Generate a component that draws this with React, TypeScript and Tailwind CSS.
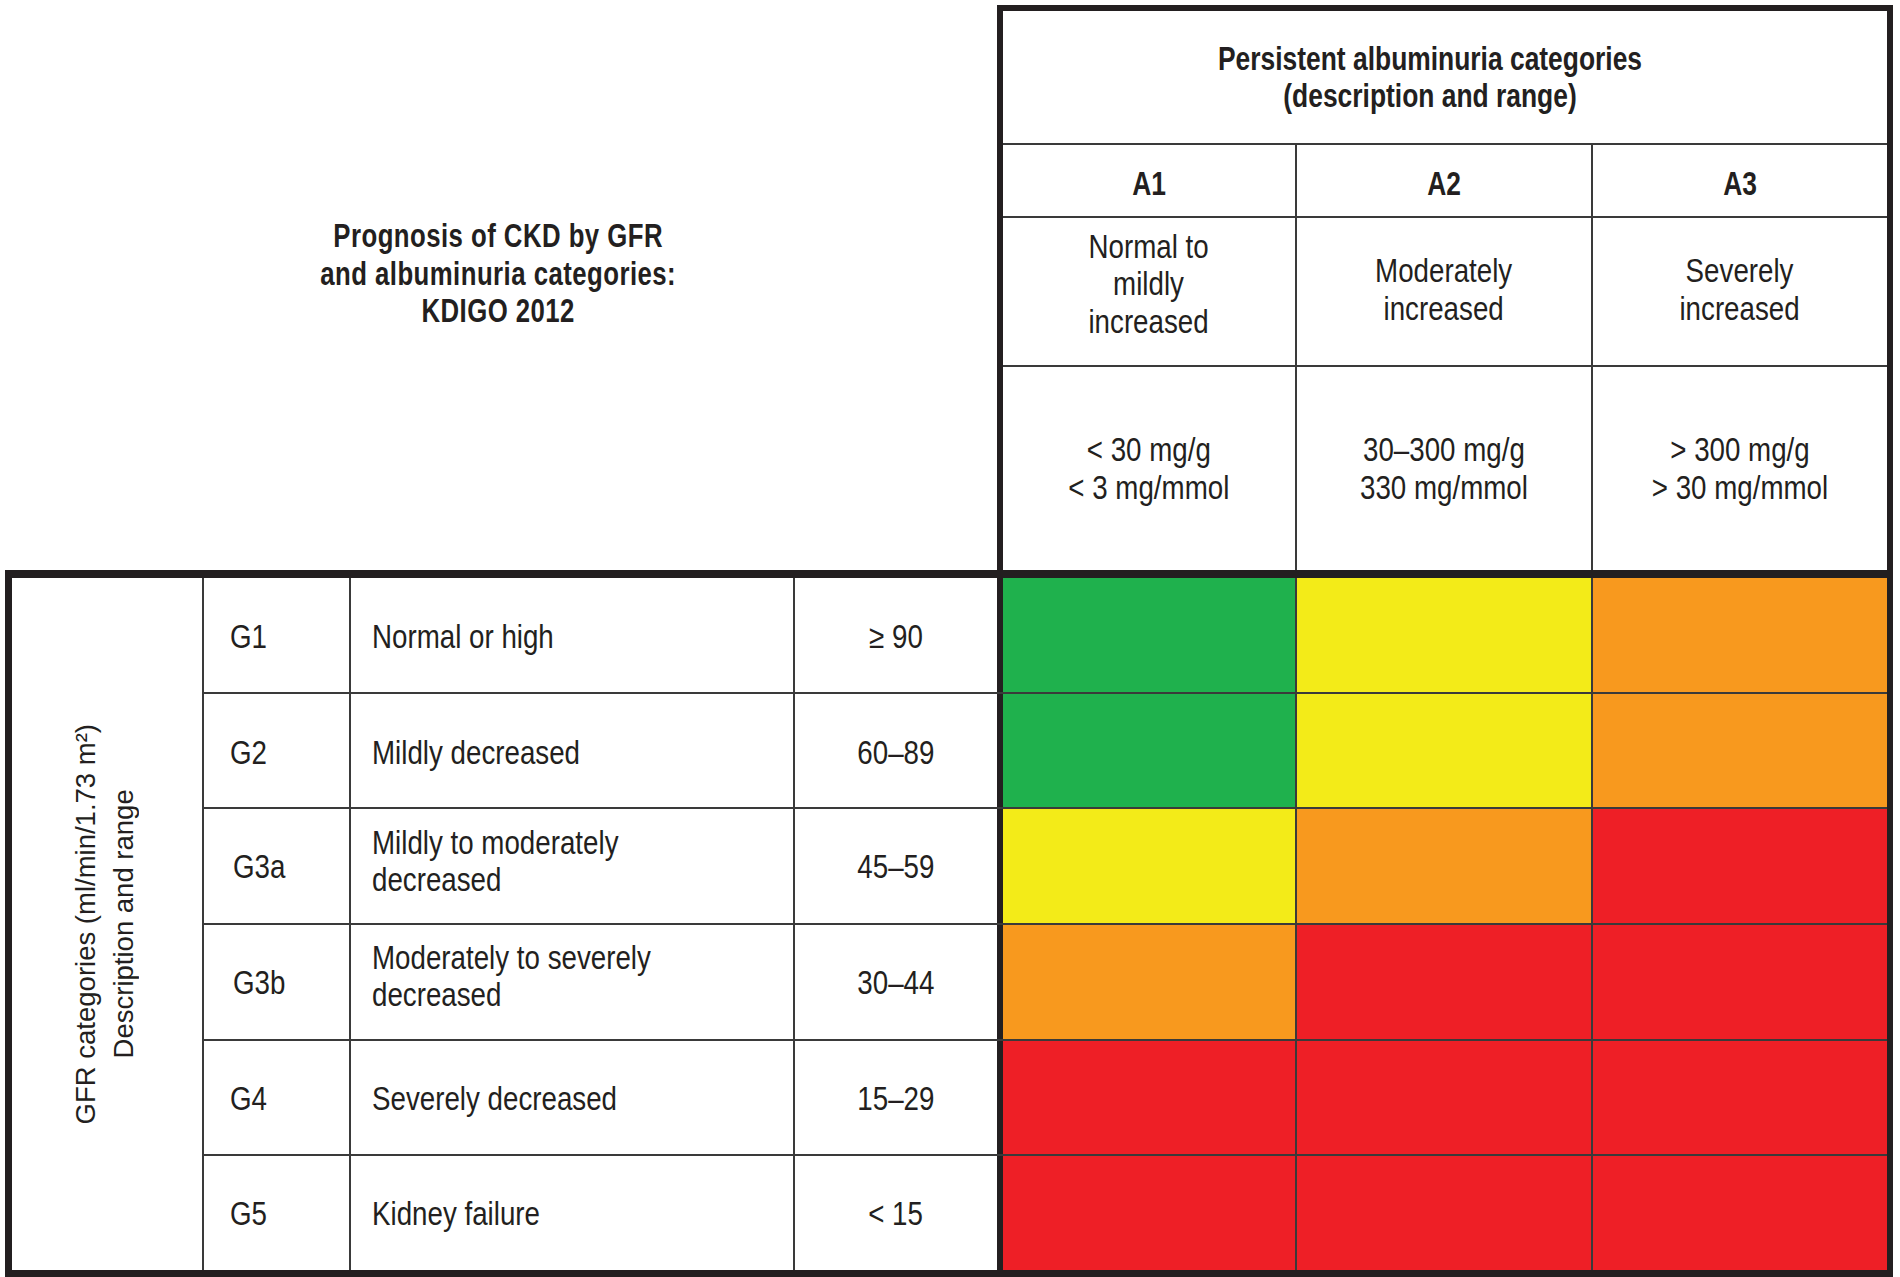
import React from "react";

const G = "bg-[#1fb14d]";
const Y = "bg-[#f3eb18]";
const O = "bg-[#f8991e]";
const R = "bg-[#ee1f26]";

type Row = { g: string; desc: React.ReactNode; range: string; colors: string[]; gpad: string; dpad: string };

const rows: Row[] = [
  { g: "G1", desc: "Normal or high", range: "≥ 90", colors: [G, Y, O], gpad: "pl-[26px]", dpad: "pt-[4px]" },
  { g: "G2", desc: "Mildly decreased", range: "60–89", colors: [G, Y, O], gpad: "pl-[26px]", dpad: "pt-[4px]" },
  {
    g: "G3a",
    desc: (
      <>
        Mildly to moderately
        <br />
        decreased
      </>
    ),
    range: "45–59",
    colors: [Y, O, R],
    gpad: "pl-[29px]",
    dpad: "pb-[10px]",
  },
  {
    g: "G3b",
    desc: (
      <>
        Moderately to severely
        <br />
        decreased
      </>
    ),
    range: "30–44",
    colors: [O, R, R],
    gpad: "pl-[29px]",
    dpad: "pb-[11px]",
  },
  { g: "G4", desc: "Severely decreased", range: "15–29", colors: [R, R, R], gpad: "pl-[26px]", dpad: "pt-[2px]" },
  { g: "G5", desc: "Kidney failure", range: "< 15", colors: [R, R, R], gpad: "pl-[26px]", dpad: "pt-[1px]" },
];

const line = "border-[#3a3a3a]";

export default function App() {
  return (
    <div className="w-[1900px] h-[1277px] bg-white text-[#231f20] font-['Liberation_Sans',Arial,sans-serif] text-[33px] leading-[37.5px] overflow-hidden">
      {/* top section */}
      <div className="flex pt-[5px] h-[570px]">
        <div className="w-[997px] flex items-center justify-center pb-[28px]">
          <div className="text-center font-bold scale-x-[0.78] tracking-[0.6px]">
            Prognosis of CKD by GFR
            <br />
            and albuminuria categories:
            <br />
            KDIGO 2012
          </div>
        </div>
        <div className="w-[896px] border-t-[6px] border-l-[6px] border-r-[6px] border-[#231f20] flex flex-col">
          <div className={`h-[134px] border-b-2 ${line} flex items-center justify-center pr-[30px]`}>
            <div className="text-center font-bold scale-x-[0.8]">
              Persistent albuminuria categories
              <br />
              (description and range)
            </div>
          </div>
          <div className={`h-[73px] border-b-2 ${line} grid grid-cols-[294px_296px_1fr] font-bold`}>
            <div className={`border-r-2 ${line} flex items-center justify-center pt-[6px]`}>
              <div className="scale-x-[0.8]">A1</div>
            </div>
            <div className={`border-r-2 ${line} flex items-center justify-center pt-[6px]`}>
              <div className="scale-x-[0.8]">A2</div>
            </div>
            <div className="flex items-center justify-center pt-[6px]">
              <div className="scale-x-[0.8]">A3</div>
            </div>
          </div>
          <div className={`h-[149px] border-b-2 ${line} grid grid-cols-[294px_296px_1fr] text-center`}>
            <div className={`border-r-2 ${line} flex items-center justify-center pb-[15px]`}>
              <div className="scale-x-[0.84]">
                Normal to
                <br />
                mildly
                <br />
                increased
              </div>
            </div>
            <div className={`border-r-2 ${line} flex items-center justify-center pb-[4px]`}>
              <div className="scale-x-[0.84]">
                Moderately
                <br />
                increased
              </div>
            </div>
            <div className="flex items-center justify-center pb-[4px]">
              <div className="scale-x-[0.84]">
                Severely
                <br />
                increased
              </div>
            </div>
          </div>
          <div className="flex-1 grid grid-cols-[294px_296px_1fr] text-center">
            <div className={`border-r-2 ${line} flex items-center justify-center`}>
              <div className="scale-x-[0.84]">
                &lt; 30 mg/g
                <br />
                &lt; 3 mg/mmol
              </div>
            </div>
            <div className={`border-r-2 ${line} flex items-center justify-center`}>
              <div className="scale-x-[0.84]">
                30–300 mg/g
                <br />
                330 mg/mmol
              </div>
            </div>
            <div className="flex items-center justify-center">
              <div className="scale-x-[0.84]">
                &gt; 300 mg/g
                <br />
                &gt; 30 mg/mmol
              </div>
            </div>
          </div>
        </div>
      </div>

      {/* bottom section */}
      <div className="ml-[5px] w-[1888px] h-[707px] border-l-[7px] border-t-[8px] border-r-[6px] border-b-[7px] border-[#231f20] flex">
        <div className={`w-[192px] border-r-2 ${line} flex items-center justify-center pr-[6px]`}>
          <div className="[writing-mode:vertical-rl] rotate-180 text-center text-[27.5px] leading-[37.5px]">
            GFR categories (ml/min/1.73 m²)
            <br />
            Description and range
          </div>
        </div>
        <div className="flex-1 flex flex-col">
          {rows.map((r, i) => (
            <div key={r.g} className={`flex-1 flex ${i < rows.length - 1 ? `border-b-2 ${line}` : ""}`}>
              <div className={`w-[147px] border-r-2 ${line} flex items-center ${r.dpad === "pt-[4px]" ? "pt-[4px]" : "pt-[2px]"} ${r.gpad}`}>
                <div className="scale-x-[0.84] origin-left">{r.g}</div>
              </div>
              <div className={`w-[444px] border-r-2 ${line} flex items-center pl-[21px] ${r.dpad}`}>
                <div className="scale-x-[0.84] origin-left whitespace-nowrap">{r.desc}</div>
              </div>
              <div className={`w-[202px] flex items-center justify-center ${r.dpad === "pt-[4px]" ? "pt-[4px]" : "pt-[2px]"}`}>
                <div className="scale-x-[0.84]">{r.range}</div>
              </div>
              <div className="w-[6px] bg-[#231f20]" />
              <div className={`w-[294px] border-r-2 ${line} ${r.colors[0]}`} />
              <div className={`w-[296px] border-r-2 ${line} ${r.colors[1]}`} />
              <div className={`flex-1 ${r.colors[2]}`} />
            </div>
          ))}
        </div>
      </div>
    </div>
  );
}
